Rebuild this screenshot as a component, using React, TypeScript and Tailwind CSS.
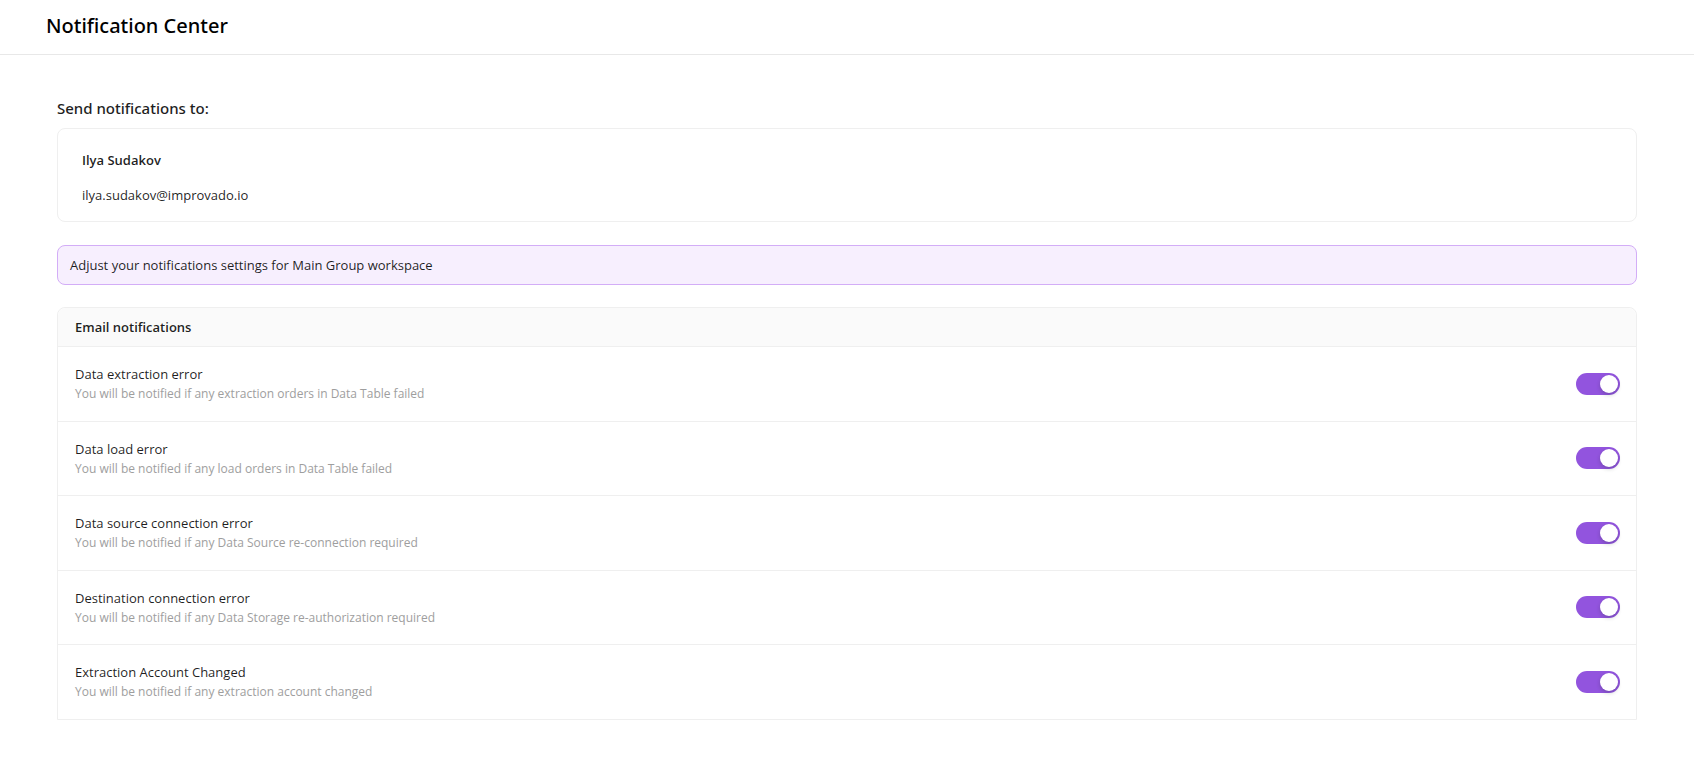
const notifications = [
  {
    title: "Data extraction error",
    description: "You will be notified if any extraction orders in Data Table failed",
  },
  {
    title: "Data load error",
    description: "You will be notified if any load orders in Data Table failed",
  },
  {
    title: "Data source connection error",
    description: "You will be notified if any Data Source re-connection required",
  },
  {
    title: "Destination connection error",
    description: "You will be notified if any Data Storage re-authorization required",
  },
  {
    title: "Extraction Account Changed",
    description: "You will be notified if any extraction account changed",
  },
];

const Toggle = () => (
  <button className="relative h-[22px] w-[44px] shrink-0 rounded-full bg-[#9254de]">
    <span className="absolute right-[2px] top-[2px] h-[18px] w-[18px] rounded-full bg-white shadow-[0_2px_4px_rgba(0,35,11,0.2)]" />
  </button>
);

const App = () => {
  return (
    <div className="min-h-screen bg-white font-['Open_Sans','Noto_Sans',sans-serif] text-[13px] text-[rgba(0,0,0,0.88)]">
      <header className="flex h-[55px] items-center border-b border-[#e8e8e8] px-[46px] pb-[2px]">
        <h1 className="font-['Noto_Sans',sans-serif] text-[20px] font-medium leading-7 text-black">
          Notification Center
        </h1>
      </header>

      <main className="px-[57px] pt-[43px]">
        <h2 className="font-['Noto_Sans',sans-serif] text-[15px] font-medium leading-5 text-[#1f1f1f]">
          Send notifications to:
        </h2>

        <div className="mt-[10px] rounded-lg border border-[#efefef] px-6 pb-[17px] pt-[22px]">
          <div className="font-semibold leading-[18px]">Ilya Sudakov</div>
          <div className="mt-[17px] leading-[18px]">ilya.sudakov@improvado.io</div>
        </div>

        <div className="mt-[23px] rounded-lg border border-[#d3adf7] bg-[#f7effe] px-3 py-[10px] leading-[18px]">
          Adjust your notifications settings for Main Group workspace
        </div>

        <div className="mt-[22px] rounded-t-lg border border-[#efefef]">
          <div className="rounded-t-lg border-b border-[#efefef] bg-[#fafafa] px-[17px] py-[10px] font-semibold leading-[18px]">
            Email notifications
          </div>
          {notifications.map((item, i) => (
            <div
              key={item.title}
              className={`flex items-center justify-between pb-[18.5px] pl-[17px] pr-[16px] pt-[18px] ${
                i < notifications.length - 1 ? "border-b border-[#efefef]" : ""
              }`}
            >
              <div>
                <div className="leading-[18px]">{item.title}</div>
                <div className="mt-[3px] text-[12px] leading-4 text-[#9e9e9e]">{item.description}</div>
              </div>
              <Toggle />
            </div>
          ))}
        </div>
      </main>
    </div>
  );
};

export default App;
